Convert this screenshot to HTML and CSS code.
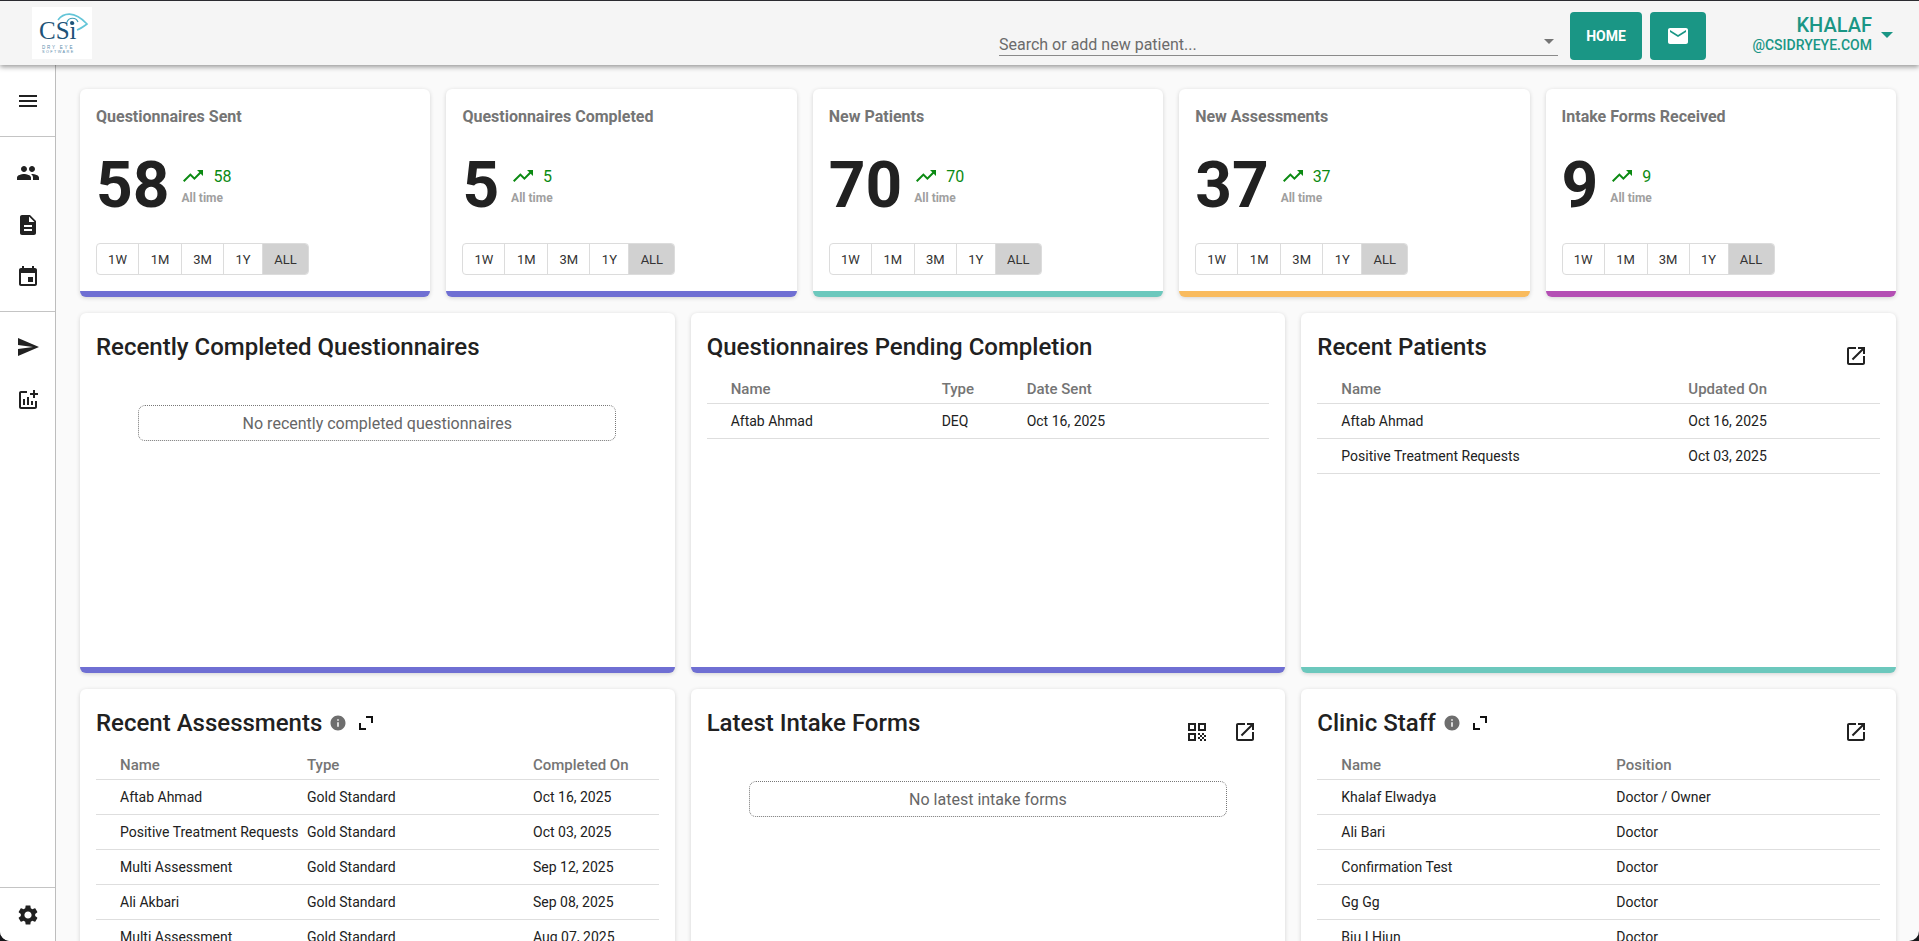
FILE: index.html
```html
<!DOCTYPE html>
<html lang="en">
<head>
    <meta charset="UTF-8">
    <title>CSI Dry Eye Software - Dashboard</title>
    <link rel="stylesheet" href="styles.css">
</head>
<body>

    <!-- material icons used all over the page -->
    <svg class="sprite" xmlns="http://www.w3.org/2000/svg">
        <symbol id="i-menu" viewBox="0 0 24 24"><path d="M3 18h18v-2H3v2zm0-5h18v-2H3v2zm0-7v2h18V6H3z"/></symbol>
        <symbol id="i-people" viewBox="0 0 24 24"><path d="M16 11c1.66 0 2.99-1.34 2.99-3S17.66 5 16 5c-1.66 0-3 1.34-3 3s1.34 3 3 3zm-8 0c1.66 0 2.99-1.34 2.99-3S9.66 5 8 5C6.34 5 5 6.34 5 8s1.34 3 3 3zm0 2c-2.33 0-7 1.17-7 3.5V19h14v-2.5c0-2.33-4.67-3.5-7-3.5zm8 0c-.29 0-.62.02-.97.05 1.16.84 1.97 1.97 1.97 3.45V19h6v-2.5c0-2.33-4.67-3.5-7-3.5z"/></symbol>
        <symbol id="i-doc" viewBox="0 0 24 24"><path d="M14 2H6c-1.1 0-1.99.9-1.99 2L4 20c0 1.1.89 2 1.99 2H18c1.1 0 2-.9 2-2V8l-6-6zm2 16H8v-2h8v2zm0-4H8v-2h8v2zm-3-5V3.5L18.5 9H13z"/></symbol>
        <symbol id="i-event" viewBox="0 0 24 24"><path d="M17 12h-5v5h5v-5zM16 1v2H8V1H6v2H5c-1.11 0-1.99.9-1.99 2L3 19c0 1.1.89 2 2 2h14c1.1 0 2-.9 2-2V5c0-1.1-.9-2-2-2h-1V1h-2zm3 18H5V8h14v11z"/></symbol>
        <symbol id="i-send" viewBox="0 0 24 24"><path d="M2.01 21L23 12 2.01 3 2 10l15 2-15 2z"/></symbol>
        <symbol id="i-chart" viewBox="0 0 24 24"><path d="M22 5v2h-3v3h-2V7h-3V5h3V2h2v3h3zm-3 14H5V5h6V3H5c-1.1 0-2 .9-2 2v14c0 1.1.9 2 2 2h14c1.1 0 2-.9 2-2v-6h-2v6zm-4-6v4h2v-4h-2zm-4 4h2V9h-2v8zm-2 0v-6H7v6h2z"/></symbol>
        <symbol id="i-settings" viewBox="0 0 24 24"><path d="M19.14 12.94c.04-.3.06-.61.06-.94 0-.32-.02-.64-.07-.94l2.03-1.58c.18-.14.23-.41.12-.61l-1.92-3.32c-.12-.22-.37-.29-.59-.22l-2.39.96c-.5-.38-1.03-.7-1.62-.94l-.36-2.54c-.04-.24-.24-.41-.48-.41h-3.84c-.24 0-.43.17-.47.41l-.36 2.54c-.59.24-1.13.57-1.62.94l-2.39-.96c-.22-.08-.47 0-.59.22L2.74 8.87c-.12.21-.08.47.12.61l2.03 1.58c-.05.3-.09.63-.09.94s.02.64.07.94l-2.03 1.58c-.18.14-.23.41-.12.61l1.92 3.32c.12.22.37.29.59.22l2.39-.96c.5.38 1.03.7 1.62.94l.36 2.54c.05.24.24.41.48.41h3.84c.24 0 .44-.17.47-.41l.36-2.54c.59-.24 1.13-.56 1.62-.94l2.39.96c.22.08.47 0 .59-.22l1.92-3.32c.12-.22.07-.47-.12-.61l-2.01-1.58zM12 15.6c-1.98 0-3.6-1.62-3.6-3.6s1.62-3.6 3.6-3.6 3.6 1.62 3.6 3.6-1.62 3.6-3.6 3.6z"/></symbol>
        <symbol id="i-mail" viewBox="0 0 24 24"><path d="M20 4H4c-1.1 0-1.99.9-1.99 2L2 18c0 1.1.9 2 2 2h16c1.1 0 2-.9 2-2V6c0-1.1-.9-2-2-2zm0 4l-8 5-8-5V6l8 5 8-5v2z"/></symbol>
        <symbol id="i-trend" viewBox="0 0 24 24"><path d="M16 6l2.29 2.29-4.88 4.88-4-4L2 16.59 3.41 18l6-6 4 4 6.3-6.29L22 12V6z"/></symbol>
        <symbol id="i-open" viewBox="0 0 24 24"><path d="M19 19H5V5h7V3H5c-1.11 0-2 .9-2 2v14c0 1.1.89 2 2 2h14c1.1 0 2-.9 2-2v-7h-2v7zM14 3v2h3.59l-9.83 9.83 1.41 1.41L19 6.41V10h2V3h-7z"/></symbol>
        <symbol id="i-qr" viewBox="0 0 24 24"><path d="M3 11h8V3H3v8zm2-6h4v4H5V5zM3 21h8v-8H3v8zm2-6h4v4H5v-4zM13 3v8h8V3h-8zm6 6h-4V5h4v4zM19 19h2v2h-2zM13 13h2v2h-2zM15 15h2v2h-2zM13 17h2v2h-2zM15 19h2v2h-2zM17 17h2v2h-2zM17 13h2v2h-2zM19 15h2v2h-2z"/></symbol>
        <symbol id="i-info" viewBox="0 0 24 24"><path d="M12 2C6.48 2 2 6.48 2 12s4.48 10 10 10 10-4.48 10-10S17.52 2 12 2zm1 15h-2v-6h2v6zm0-8h-2V7h2v2z"/></symbol>
        <symbol id="i-expand" viewBox="0 0 14 14"><path d="M0 7h2v5h5v2H0zM7 0h7v7h-2V2H7z"/></symbol>
    </svg>

    <div class="app">

        <header class="topbar">
            <div class="logo">
                <svg width="60" height="52" viewBox="0 0 60 52">
                    <path d="M26 13 C31 6 42 3 55 17 C51 20 48 22 45 23" fill="none" stroke="#63c5d8" stroke-width="1.6"/>
                    <path d="M35 15 C37 10 44 10 46 15" fill="none" stroke="#3f9fb8" stroke-width="1.2"/>
                    <circle cx="40" cy="16" r="2" fill="#1d5378"/>
                    <text x="7" y="32" class="logo-name">CSi</text>
                    <text x="10" y="41.5" class="logo-sub">DRY EYE</text>
                    <text x="10" y="46" class="logo-sub logo-sub-small">SOFTWARE</text>
                </svg>
            </div>

            <div class="search">
                <span>Search or add new patient...</span>
                <i class="caret caret-grey"></i>
            </div>
            <button class="btn-teal btn-home">HOME</button>
            <button class="btn-teal btn-mail"><svg class="icon"><use href="#i-mail"/></svg></button>
            <div class="user">
                <div class="user-name">KHALAF</div>
                <div class="user-mail">@CSIDRYEYE.COM</div>
            </div>
            <i class="caret caret-teal"></i>
        </header>

        <div class="body-row">

            <nav class="sidebar">
                <div class="side-group side-menu">
                    <svg class="icon"><use href="#i-menu"/></svg>
                </div>
                <div class="side-group side-main">
                    <a class="side-link"><svg class="icon"><use href="#i-people"/></svg></a>
                    <a class="side-link"><svg class="icon"><use href="#i-doc"/></svg></a>
                    <a class="side-link"><svg class="icon"><use href="#i-event"/></svg></a>
                </div>
                <div class="side-group side-tools">
                    <a class="side-link"><svg class="icon"><use href="#i-send"/></svg></a>
                    <a class="side-link"><svg class="icon"><use href="#i-chart"/></svg></a>
                </div>
                <div class="side-settings">
                    <svg class="icon"><use href="#i-settings"/></svg>
                </div>
            </nav>

            <main class="main">

                <section class="stats">
                    <div class="stat bar-purple">
                        <h3>Questionnaires Sent</h3>
                        <div class="stat-row">
                            <div class="stat-num">58</div>
                            <div class="stat-side">
                                <div class="trend"><svg class="icon"><use href="#i-trend"/></svg><span>58</span></div>
                                <div class="stat-label">All time</div>
                            </div>
                        </div>
                        <div class="ranges"><span>1W</span><span>1M</span><span>3M</span><span>1Y</span><span class="active">ALL</span></div>
                    </div>
                    <div class="stat bar-purple">
                        <h3>Questionnaires Completed</h3>
                        <div class="stat-row">
                            <div class="stat-num">5</div>
                            <div class="stat-side">
                                <div class="trend"><svg class="icon"><use href="#i-trend"/></svg><span>5</span></div>
                                <div class="stat-label">All time</div>
                            </div>
                        </div>
                        <div class="ranges"><span>1W</span><span>1M</span><span>3M</span><span>1Y</span><span class="active">ALL</span></div>
                    </div>
                    <div class="stat bar-teal">
                        <h3>New Patients</h3>
                        <div class="stat-row">
                            <div class="stat-num">70</div>
                            <div class="stat-side">
                                <div class="trend"><svg class="icon"><use href="#i-trend"/></svg><span>70</span></div>
                                <div class="stat-label">All time</div>
                            </div>
                        </div>
                        <div class="ranges"><span>1W</span><span>1M</span><span>3M</span><span>1Y</span><span class="active">ALL</span></div>
                    </div>
                    <div class="stat bar-orange">
                        <h3>New Assessments</h3>
                        <div class="stat-row">
                            <div class="stat-num">37</div>
                            <div class="stat-side">
                                <div class="trend"><svg class="icon"><use href="#i-trend"/></svg><span>37</span></div>
                                <div class="stat-label">All time</div>
                            </div>
                        </div>
                        <div class="ranges"><span>1W</span><span>1M</span><span>3M</span><span>1Y</span><span class="active">ALL</span></div>
                    </div>
                    <div class="stat bar-magenta">
                        <h3>Intake Forms Received</h3>
                        <div class="stat-row">
                            <div class="stat-num">9</div>
                            <div class="stat-side">
                                <div class="trend"><svg class="icon"><use href="#i-trend"/></svg><span>9</span></div>
                                <div class="stat-label">All time</div>
                            </div>
                        </div>
                        <div class="ranges"><span>1W</span><span>1M</span><span>3M</span><span>1Y</span><span class="active">ALL</span></div>
                    </div>
                </section>

                <section class="panels">

                    <div class="panel bar-purple">
                        <div class="panel-head">
                            <h2>Recently Completed Questionnaires</h2>
                        </div>
                        <div class="empty">No recently completed questionnaires</div>
                    </div>

                    <div class="panel bar-purple">
                        <div class="panel-head">
                            <h2>Questionnaires Pending Completion</h2>
                        </div>
                        <table class="list list-pending">
                            <thead><tr><th>Name</th><th>Type</th><th>Date Sent</th></tr></thead>
                            <tbody>
                                <tr><td>Aftab Ahmad</td><td>DEQ</td><td>Oct 16, 2025</td></tr>
                            </tbody>
                        </table>
                    </div>

                    <div class="panel bar-teal">
                        <div class="panel-head">
                            <h2>Recent Patients</h2>
                            <div class="panel-actions">
                                <a class="icon-btn"><svg class="icon"><use href="#i-open"/></svg></a>
                            </div>
                        </div>
                        <table class="list list-patients">
                            <thead><tr><th>Name</th><th>Updated On</th></tr></thead>
                            <tbody>
                                <tr><td>Aftab Ahmad</td><td>Oct 16, 2025</td></tr>
                                <tr><td>Positive Treatment Requests</td><td>Oct 03, 2025</td></tr>
                            </tbody>
                        </table>
                    </div>

                    <div class="panel">
                        <div class="panel-head">
                            <h2>Recent Assessments</h2>
                            <svg class="info"><use href="#i-info"/></svg>
                            <svg class="expand"><use href="#i-expand"/></svg>
                        </div>
                        <table class="list list-assess">
                            <thead><tr><th>Name</th><th>Type</th><th>Completed On</th></tr></thead>
                            <tbody>
                                <tr><td>Aftab Ahmad</td><td>Gold Standard</td><td>Oct 16, 2025</td></tr>
                                <tr><td>Positive Treatment Requests</td><td>Gold Standard</td><td>Oct 03, 2025</td></tr>
                                <tr><td>Multi Assessment</td><td>Gold Standard</td><td>Sep 12, 2025</td></tr>
                                <tr><td>Ali Akbari</td><td>Gold Standard</td><td>Sep 08, 2025</td></tr>
                                <tr><td>Multi Assessment</td><td>Gold Standard</td><td>Aug 07, 2025</td></tr>
                            </tbody>
                        </table>
                    </div>

                    <div class="panel">
                        <div class="panel-head">
                            <h2>Latest Intake Forms</h2>
                            <div class="panel-actions">
                                <a class="icon-btn"><svg class="icon"><use href="#i-qr"/></svg></a>
                                <a class="icon-btn"><svg class="icon"><use href="#i-open"/></svg></a>
                            </div>
                        </div>
                        <div class="empty">No latest intake forms</div>
                    </div>

                    <div class="panel">
                        <div class="panel-head">
                            <h2>Clinic Staff</h2>
                            <svg class="info"><use href="#i-info"/></svg>
                            <svg class="expand"><use href="#i-expand"/></svg>
                            <div class="panel-actions">
                                <a class="icon-btn"><svg class="icon"><use href="#i-open"/></svg></a>
                            </div>
                        </div>
                        <table class="list list-staff">
                            <thead><tr><th>Name</th><th>Position</th></tr></thead>
                            <tbody>
                                <tr><td>Khalaf Elwadya</td><td>Doctor / Owner</td></tr>
                                <tr><td>Ali Bari</td><td>Doctor</td></tr>
                                <tr><td>Confirmation Test</td><td>Doctor</td></tr>
                                <tr><td>Gg Gg</td><td>Doctor</td></tr>
                                <tr><td>Biu I Hiun</td><td>Doctor</td></tr>
                            </tbody>
                        </table>
                    </div>

                </section>
            </main>
        </div>
    </div>

</body>
</html>
```

FILE: styles.css
```css
* {
    box-sizing: border-box;
}
html, body {
    height: 100%;
    margin: 0;
    overflow: hidden;
}
body {
    font-family: Roboto, "Liberation Sans", sans-serif;
    font-size: 14px;
    color: #212121;
    background-color: #17171a;
}
.sprite {
    display: none;
}
.icon {
    width: 24px;
    height: 24px;
    fill: #212121;
    display: block;
}
.app {
    height: 100%;
    display: flex;
    flex-direction: column;
    background-color: #fafafa;
    border-radius: 0 0 10px 10px;
    overflow: hidden;
}

/* top bar */
.topbar {
    height: 65px;
    flex: none;
    display: flex;
    align-items: flex-start;
    padding: 0 26px 0 32px;
    background-color: #f5f5f5;
    border-top: 1px solid #2b2b30;
    box-shadow: 0 2px 5px rgba(0, 0, 0, 0.4);
    position: relative;
    z-index: 2;
}
.logo {
    width: 60px;
    height: 52px;
    margin-top: 6px;
    background-color: white;
}
.logo svg {
    display: block;
}
.logo-name {
    font-family: "Liberation Serif", serif;
    font-size: 25px;
    fill: #1d5378;
}
.logo-sub {
    font-family: "Liberation Sans", sans-serif;
    font-size: 4.5px;
    letter-spacing: 1.8px;
    fill: #5c8cab;
}
.logo-sub-small {
    font-size: 3.8px;
    letter-spacing: 1.4px;
}
.search {
    width: 559px;
    height: 41px;
    margin: 14px 0 0 auto;
    display: flex;
    align-items: center;
    justify-content: space-between;
    padding: 20px 4px 0 0;
    border-bottom: 1px solid #8a8a8a;
    color: #6b6b6b;
    font-size: 16px;
}
.search span {
    line-height: 20px;
}
.caret {
    width: 0;
    height: 0;
    border-left: 5px solid transparent;
    border-right: 5px solid transparent;
    border-top: 5px solid #757575;
}
.caret-grey {
    margin-top: -7px;
}
.caret-teal {
    margin: 31px 0 0 7px;
    border-left-width: 6.5px;
    border-right-width: 6.5px;
    border-top: 6.5px solid #1a9685;
}
.btn-teal {
    height: 48px;
    margin-top: 11px;
    border: none;
    border-radius: 4px;
    background-color: #1a9685;
    color: white;
    font-family: inherit;
    font-size: 14px;
    font-weight: 700;
    display: flex;
    align-items: center;
    justify-content: center;
    padding: 0;
}
.btn-teal .icon {
    fill: white;
}
.btn-home {
    width: 72px;
    margin-left: 12px;
}
.btn-mail {
    width: 56px;
    margin-left: 8px;
}
.user {
    width: 168px;
    margin: 14px 0 0;
    padding-right: 2px;
    text-align: right;
    color: #1a9685;
}
.user-name {
    font-size: 20px;
    font-weight: 500;
    line-height: 20px;
}
.user-mail {
    font-size: 14px;
    font-weight: 500;
    line-height: 20px;
}

/* left nav */
.body-row {
    flex: 1;
    display: flex;
    min-height: 0;
}
.sidebar {
    width: 56px;
    flex: none;
    display: flex;
    flex-direction: column;
    background-color: white;
    border-right: 1px solid #bdbdbd;
}
.side-group {
    border-bottom: 1px solid #c4c4c4;
}
.side-menu {
    height: 72px;
    display: flex;
    align-items: center;
    justify-content: center;
}
.side-main {
    height: 175px;
    padding-top: 10px;
}
.side-tools {
    border-bottom: none;
    padding-top: 8px;
}
.side-link {
    height: 52px;
    display: flex;
    align-items: center;
    justify-content: center;
}
.side-tools .side-link {
    height: 53px;
}
.side-settings {
    margin-top: auto;
    height: 54px;
    display: flex;
    align-items: center;
    justify-content: center;
    border-top: 1px solid #c4c4c4;
}

/* content */
.main {
    flex: 1;
    min-width: 0;
    padding: 24px 23px 0 24px;
    overflow: hidden;
}
.stats {
    display: grid;
    grid-template-columns: repeat(5, 1fr);
    gap: 16px;
}
.stat, .panel {
    background-color: white;
    border-radius: 6px;
    box-shadow: 0 1px 4px rgba(0, 0, 0, 0.16);
}
.stat {
    height: 208px;
    padding: 17px 16px 0;
}
.bar-purple {
    border-bottom: 6px solid #6f6fd3;
}
.bar-teal {
    border-bottom: 6px solid #6cc8bd;
}
.bar-orange {
    border-bottom: 6px solid #f9bb5e;
}
.bar-magenta {
    border-bottom: 6px solid #b44fb4;
}
.stat h3 {
    margin: 0;
    font-size: 16px;
    font-weight: 700;
    line-height: 22px;
    color: #757575;
}
.stat-row {
    display: flex;
    align-items: center;
    margin-top: 24px;
    height: 66px;
}
.stat-num {
    font-size: 64px;
    font-weight: 700;
    line-height: 66px;
    margin-right: 12px;
    position: relative;
    top: 1px;
}
.trend {
    display: flex;
    align-items: center;
    gap: 8px;
    height: 24px;
    color: #0b8a12;
    font-size: 16px;
}
.trend .icon {
    fill: #0b8a12;
}
.stat-label {
    margin-top: 2px;
    font-size: 12px;
    font-weight: 700;
    line-height: 16px;
    color: #a0a0a0;
}
.ranges {
    display: inline-flex;
    margin-top: 25px;
    border: 1px solid #dcdcdc;
    border-radius: 4px;
    overflow: hidden;
    height: 32px;
}
.ranges span {
    width: 42px;
    display: flex;
    align-items: center;
    justify-content: center;
    font-size: 13px;
    color: #333;
    border-right: 1px solid #dcdcdc;
}
.ranges span:nth-child(2) {
    width: 43px;
}
.ranges span:nth-child(4) {
    width: 39px;
}
.ranges span.active {
    width: 45px;
    background-color: #d1d1d1;
    border-right: none;
}

.panels {
    display: grid;
    grid-template-columns: repeat(3, 1fr);
    grid-auto-rows: 360px;
    gap: 16px;
    margin-top: 16px;
}
.panel {
    padding: 0 16px;
}
.panel-head {
    height: 55px;
    display: flex;
    align-items: flex-start;
    padding-top: 19px;
}
.panel-head h2 {
    margin: 0;
    font-size: 24px;
    font-weight: 500;
    line-height: 30px;
    color: #212121;
}
.info {
    width: 18px;
    height: 18px;
    fill: #6e6e6e;
    margin: 6px 0 0 7px;
}
.expand {
    width: 14px;
    height: 14px;
    fill: #111;
    margin: 8px 0 0 12px;
}
.panel-actions {
    margin-left: auto;
    display: flex;
}
.icon-btn {
    width: 48px;
    height: 30px;
    margin-top: 9px;
    display: flex;
    align-items: center;
    justify-content: center;
}
.empty {
    width: 85%;
    height: 36px;
    margin: 37px auto 0;
    border: 1px dotted #777;
    border-radius: 7px;
    display: flex;
    align-items: center;
    justify-content: center;
    font-size: 16px;
    color: #666;
}

/* tables */
.list {
    width: 100%;
    border-collapse: collapse;
    table-layout: fixed;
}
.list th, .list td {
    height: 35px;
    padding: 0;
    text-align: left;
    white-space: nowrap;
    border-bottom: 1px solid #dedede;
}
.list th {
    padding-top: 7px;
    font-size: 15px;
    font-weight: 500;
    color: #757575;
}
.list th:first-child, .list td:first-child {
    padding-left: 24px;
}
.list-pending th:nth-child(1) { width: 235px; }
.list-pending th:nth-child(2) { width: 85px; }
.list-patients th:nth-child(1) { width: 371px; }
.list-assess th:nth-child(1) { width: 211px; }
.list-assess th:nth-child(2) { width: 226px; }
.list-staff th:nth-child(1) { width: 299px; }
```
